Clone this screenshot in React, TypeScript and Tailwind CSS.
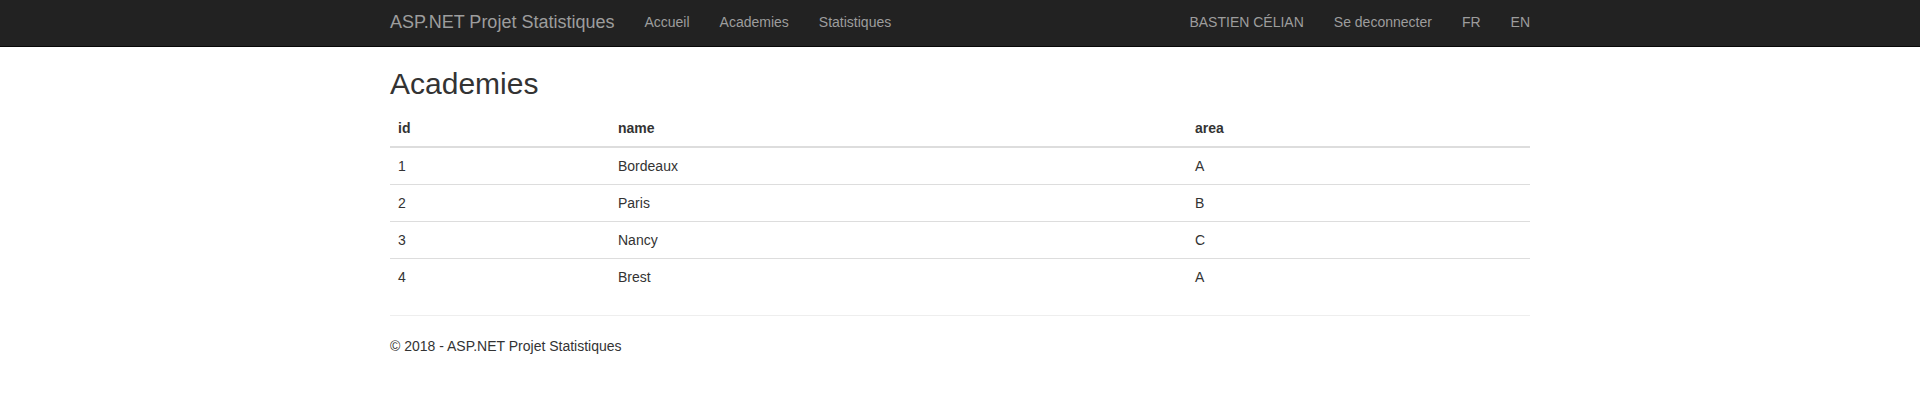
import React from 'react';

const academies = [
  { id: 1, name: 'Bordeaux', area: 'A' },
  { id: 2, name: 'Paris', area: 'B' },
  { id: 3, name: 'Nancy', area: 'C' },
  { id: 4, name: 'Brest', area: 'A' },
];

export default function App() {
  return (
    <div className="min-h-screen bg-white text-[14px] leading-[20px] text-[#333333] font-['Liberation_Sans',Arial,sans-serif]">
      {/* Navbar */}
      <header className="h-[47px] bg-[#222222] border-b border-[#080808]">
        <div className="w-[1170px] mx-auto px-[15px] flex justify-between">
          <div className="flex -ml-[15px]">
            <a href="#" className="px-[15px] pt-[12px] text-[18px] leading-[20px] text-[#9d9d9d]">
              ASP.NET Projet Statistiques
            </a>
            <nav className="flex">
              <a href="#" className="pt-[12px] px-[15px] text-[#9d9d9d]">Accueil</a>
              <a href="#" className="pt-[12px] px-[15px] text-[#9d9d9d]">Academies</a>
              <a href="#" className="pt-[12px] px-[15px] text-[#9d9d9d]">Statistiques</a>
            </nav>
          </div>
          <nav className="flex -mr-[15px]">
            <a href="#" className="pt-[12px] px-[15px] text-[#9d9d9d]">BASTIEN CÉLIAN</a>
            <a href="#" className="pt-[12px] px-[15px] text-[#9d9d9d]">Se deconnecter</a>
            <a href="#" className="pt-[12px] px-[15px] text-[#9d9d9d]">FR</a>
            <a href="#" className="pt-[12px] px-[15px] text-[#9d9d9d]">EN</a>
          </nav>
        </div>
      </header>

      {/* Contenu */}
      <main className="w-[1170px] mx-auto px-[15px]">
        <h2 className="mt-[20px] mb-[10px] text-[30px] leading-[33px] font-normal">Academies</h2>
        <table className="w-full table-fixed border-collapse mb-[20px]">
          <thead>
            <tr>
              <th className="w-[220px] p-[8px] text-left font-bold border-b-2 border-[#dddddd]">id</th>
              <th className="w-[577px] p-[8px] text-left font-bold border-b-2 border-[#dddddd]">name</th>
              <th className="p-[8px] text-left font-bold border-b-2 border-[#dddddd]">area</th>
            </tr>
          </thead>
          <tbody>
            {academies.map((a) => (
              <tr key={a.id}>
                <td className="p-[8px] border-t border-[#dddddd]">{a.id}</td>
                <td className="p-[8px] border-t border-[#dddddd]">{a.name}</td>
                <td className="p-[8px] border-t border-[#dddddd]">{a.area}</td>
              </tr>
            ))}
          </tbody>
        </table>
        <hr className="my-[20px] border-0 border-t border-[#eeeeee]" />
        <footer>
          <p className="mb-[10px]">© 2018 - ASP.NET Projet Statistiques</p>
        </footer>
      </main>
    </div>
  );
}
